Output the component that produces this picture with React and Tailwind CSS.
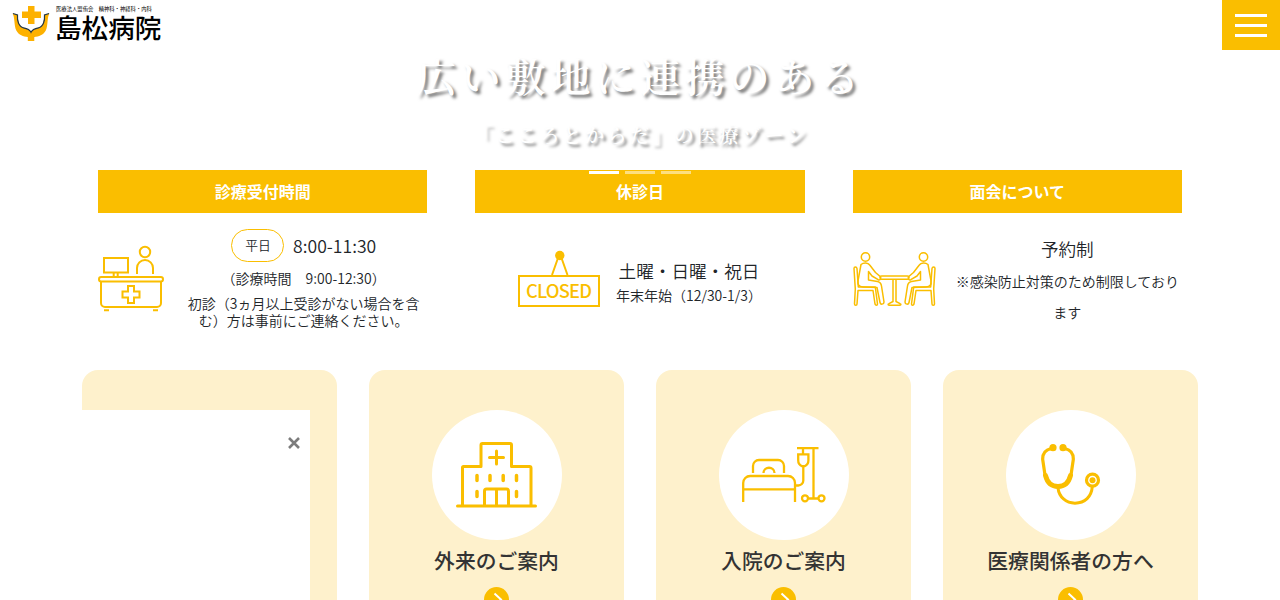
const sans = "font-['Noto_Sans_CJK_JP',sans-serif]";
const serif = "font-['Noto_Serif_CJK_JP','Noto_Serif_JP','Noto_Serif_CJK_SC',serif]";

function LogoMark() {
  return (
    <svg width="38" height="36" viewBox="0 0 38 36" className="block">
      <path d="M16 0h6.500v5.500H29V12h-6.500v6H16v-6h-6V5.500h6z" fill="#fdb100" />
      <path
        d="M.5 7.500L6 9c-.6 6 1 12 5.500 12.800 4 .8 6.500 2.500 7.500 4.700 1-2.200 3.500-3.900 7.500-4.700C31 21 32.600 15 32 9l5.500-1.500c-2.500 3-1.300 12-3.700 17-2.500 4.500-7 6.300-11.500 6.500v4h-6.500v-4c-4.500-.2-9-2-11.500-6.500C1.800 19.500 3 10.500.5 7.500z"
        fill="#fdb100"
      />
      <path
        d="M1 7.500L5.500 9c-.5 6 1.300 12 6 12.800 4 .8 6.500 2.200 7.500 4.500 1-2.300 3.500-3.700 7.500-4.500C31.200 21 33 15 32.500 9L37 7.500"
        fill="none" stroke="#243746" strokeWidth="1.200"
      />
    </svg>
  );
}

function ReceptionIcon() {
  return (
    <svg width="66" height="67" viewBox="0 0 66 67" fill="none" stroke="#fabe00" strokeWidth="2" className="block shrink-0">
      <circle cx="47" cy="7" r="5.200" />
      <path d="M39 29v-6a8 8 0 0 1 16 0v6M6 13h24v14.500H6zM15.700 28v4M19.700 28v4" />
      <rect x="1" y="32" width="64" height="4.500" rx="2.200" />
      <path d="M3 37v21a4 4 0 0 0 4 4h52a4 4 0 0 0 4-4V37M6 65.200h5M55 65.200h5" />
      <path d="M30 41h6v5.500h5.500v6H36V58h-6v-5.500h-5.500v-6H30z" />
    </svg>
  );
}

function ClosedSign() {
  return (
    <svg width="82" height="57" viewBox="0 0 82 57" fill="none" stroke="#fabe00" strokeWidth="2" className="block shrink-0">
      <circle cx="41.800" cy="5.500" r="4.700" fill="#fabe00" stroke="none" />
      <path d="M40 8l-6 17M43.500 8l6 17" />
      <rect x="1" y="26" width="80" height="30" />
      <text x="41" y="47.800" textAnchor="middle" fontSize="18.300" textLength="66" fill="#fabe00" stroke="none" fontWeight="500" fontFamily="Noto Sans CJK JP, sans-serif">CLOSED</text>
    </svg>
  );
}

function Sitter() {
  return (
    <g>
      <circle cx="12.500" cy="5" r="4.200" />
      <path d="M8 12.500c2.500-2 7-2 8.700.5l5.800 7.500 4.700 4c1.500 2 0 4-2 3.200L19 24l-3.500-4.500v8.500l9 1.500c3 .6 3.700 2 4 4.500l2.500 16c0 2.500-3.500 3-4 .5L24 35.500l-14-.6c-4.200-.2-5.500-2-5-6z" />
      <path d="M1 16.500c0-2 2.700-2 3 0L5.300 35h17l2.200 17c0 1.700-2 1.700-2.500 0l-2-13.500H5L4 52c0 1.800-2.500 1.800-2.500 0l.8-15z" />
    </g>
  );
}

function MeetingIcon() {
  return (
    <svg width="83" height="55" viewBox="0 0 83 55" fill="none" stroke="#fabe00" strokeWidth="1.500" strokeLinejoin="round" className="mt-px block shrink-0">
      <Sitter />
      <g transform="translate(83 0) scale(-1 1)"><Sitter /></g>
      <rect x="27" y="24" width="29" height="3.300" rx="1.600" />
      <path d="M40 27.500v22l-4 2.200c-1.500.6-1 1.600.5 1.600h10c1.500 0 2-1 .5-1.600l-4-2.200v-22" />
    </svg>
  );
}

function HospitalIcon() {
  return (
    <svg width="82" height="66" viewBox="0 0 82 66" fill="none" stroke="#fabe00" strokeWidth="3" strokeLinecap="round" strokeLinejoin="round" className="-mt-px">
      <path d="M1.500 64h78M6.500 63.500V25.500a1 1 0 0 1 1-1H25V3a1.500 1.500 0 0 1 1.500-1.500H54A1.500 1.500 0 0 1 55.500 3v21.500h18a1.500 1.500 0 0 1 1.500 1.500v37.500" />
      <path d="M40.500 9v13M33.500 15.500h14M28.500 63.500V49a2 2 0 0 1 2-2h20a2 2 0 0 1 2 2v14.500M40.500 48v15.500" />
      <path d="M21 33.500v5M34 33.500v5M47.200 33.500v5M60.500 33.500v5M21 49.500v5M60.500 49.500v5" strokeWidth="3.500" />
    </svg>
  );
}

function BedIcon() {
  return (
    <svg width="84" height="56" viewBox="0 0 84 56" fill="none" stroke="#fabe00" strokeWidth="2.300">
      <path d="M1.200 55V36a7 7 0 0 1 7-7H46a7 7 0 0 1 7 7v19M1.200 42.300H53M11 26v-7a6 6 0 0 1 6-6h19a6 6 0 0 1 6 6v7M21.500 26c0-7 11-7 11 0" />
      <path d="M55 1.200h21.500M71.500 1v49.500M61 1.500v6M56.200 7.300h10.200v6c0 3-2 5.200-3.700 5.900h-2.800c-1.700-.7-3.700-2.900-3.700-5.900zM61.300 19v14.500a5 5 0 0 1-5 5H53M66.500 51.500h10" />
      <circle cx="63" cy="51.300" r="3" /><circle cx="79.500" cy="51.300" r="3" />
    </svg>
  );
}

function StethoscopeIcon() {
  return (
    <svg width="60" height="62" viewBox="0 0 60 62" fill="none" stroke="#fabe00" strokeLinecap="round">
      <circle cx="12" cy="3.700" r="3.600" fill="#fabe00" stroke="none" />
      <circle cx="22" cy="3.700" r="3.600" fill="#fabe00" stroke="none" />
      <path d="M10 4.500C4 6 1.500 10 1.700 15.500L4 31M24 4.500c6 1.500 8.500 5.500 8.300 11L30 31" strokeWidth="3.200" />
      <path d="M4.500 31.500c2 8 6 11 12.500 11s10.500-3 12.500-11" strokeWidth="5" />
      <path d="M17 44c1 9 8 15.200 17 15.200 10 0 16.500-6.500 17.300-16.500" strokeWidth="3" />
      <circle cx="51.500" cy="36.200" r="6" strokeWidth="3.200" />
      <circle cx="51.500" cy="36.200" r="3" fill="#fabe00" stroke="none" />
    </svg>
  );
}

function InfoColumn({ title, children }) {
  return (
    <section className="flex flex-col">
      <h2 className="flex h-[43px] items-center justify-center bg-[#fabe00] pb-0.5 text-base font-bold text-white">{title}</h2>
      <div className="flex h-[131px] items-center font-[350]">{children}</div>
    </section>
  );
}

function ServiceCard({ icon, label }) {
  return (
    <a className="flex h-[290px] flex-col items-center rounded-2xl bg-[#fef1cc] pt-10">
      <span className="flex size-[130px] shrink-0 items-center justify-center rounded-full bg-white">{icon}</span>
      <span className="mt-[5px] h-[31px] text-[20.8px] leading-[31px] font-medium whitespace-nowrap">{label}</span>
      <span className="mt-[11px] flex size-[25px] items-center justify-center rounded-full bg-[#fabe00]">
        <svg width="25" height="25" viewBox="0 0 25 25" fill="none" stroke="#fff" strokeWidth="2"><path d="M10.500 6.500l6.500 6-6.500 6" /></svg>
      </span>
    </a>
  );
}

export default function App() {
  return (
    <div lang="ja" className={`relative h-[600px] overflow-hidden bg-white text-[#333] ${sans}`}>
      <header className="flex h-[50px] items-start justify-between">
        <div className="flex pt-1.5 pl-3">
          <LogoMark />
          <div className="flex flex-col pl-[5px] text-black">
            <span className="h-[6px] pl-px text-[5.33px] leading-[6px] whitespace-nowrap">医療法人盟侑会　精神科・神経科・内科</span>
            <span className="h-[30px] text-[26.6px] leading-[30px] font-medium whitespace-nowrap">島松病院</span>
          </div>
        </div>
        <button className="flex h-[50px] w-[58px] flex-col items-center justify-center gap-[7px] bg-[#fabe00]">
          <span className="h-[3px] w-8 bg-white" />
          <span className="h-[3px] w-8 bg-white" />
          <span className="h-[3px] w-8 bg-white" />
        </button>
      </header>

      <div className={`relative flex h-[120px] flex-col items-center font-semibold text-white [text-shadow:3px_3px_3px_rgba(0,0,0,0.5)] ${serif}`}>
        <p className="h-[50px] text-[40px] leading-[50px] tracking-[0.12em] whitespace-nowrap">広い敷地に連携のある</p>
        <p className="mt-[20px] h-[30px] text-[20px] leading-[30px] tracking-[0.12em] whitespace-nowrap">「こころとからだ」の医療ゾーン</p>
        <div className="absolute top-[121px] left-[589px] flex gap-1.5">
          <span className="h-[3px] w-[30px] bg-white" />
          <span className="h-[3px] w-[30px] bg-white/50" />
          <span className="h-[3px] w-[30px] bg-white/50" />
        </div>
      </div>

      <div className="mx-auto grid w-[1084px] grid-cols-3 gap-12 text-[#212529]">
        <InfoColumn title="診療受付時間">
          <div className="w-[82px] shrink-0"><ReceptionIcon /></div>
          <div className="flex flex-1 flex-col items-center text-sm">
            <div className="flex h-[33px] items-center gap-[9px]">
              <span className="flex h-[33px] w-[53px] items-center justify-center rounded-full border border-[#fabe00] pl-px text-[12.8px]">平日</span>
              <span className="pt-0.5 text-[17.6px]">8:00-11:30</span>
            </div>
            <p className="mt-[5px] leading-[22px]">（診療時間　9:00-12:30）</p>
            <p className="mt-[6px] w-[240px] text-center leading-[17px]">初診（3ヵ月以上受診がない場合を含む）方は事前にご連絡ください。</p>
          </div>
        </InfoColumn>
        <InfoColumn title="休診日">
          <div className="flex w-full items-center justify-center gap-4">
            <ClosedSign />
            <div className="mt-[7px] flex flex-col items-center text-sm">
              <p className="text-[17.6px] leading-[26px] whitespace-nowrap">土曜・日曜・祝日</p>
              <p className="leading-[22px] whitespace-nowrap">年末年始（12/30-1/3）</p>
            </div>
          </div>
        </InfoColumn>
        <InfoColumn title="面会について">
          <MeetingIcon />
          <div className="mt-0.5 ml-4 flex-1 pl-px text-center text-sm leading-[31px]">
            <p className="text-[17.6px] leading-[34px]">予約制</p>
            <p>※感染防止対策のため制限しております</p>
          </div>
        </InfoColumn>
      </div>

      <div className="mx-auto mt-[26px] grid w-[1116px] grid-cols-4 gap-8">
        <div className="h-[290px] rounded-2xl bg-[#fef1cc]" />
        <ServiceCard icon={<HospitalIcon />} label="外来のご案内" />
        <ServiceCard icon={<BedIcon />} label="入院のご案内" />
        <ServiceCard icon={<StethoscopeIcon />} label="医療関係者の方へ" />
      </div>

      <div className="absolute bottom-0 left-0 flex h-[190px] w-[310px] justify-end bg-white pt-[27px] pr-[10px]">
        <svg width="12" height="12" viewBox="0 0 12 12" stroke="#7c7c7c" strokeWidth="2.600"><path d="M1 1l10 10M11 1L1 11" /></svg>
      </div>
    </div>
  );
}
